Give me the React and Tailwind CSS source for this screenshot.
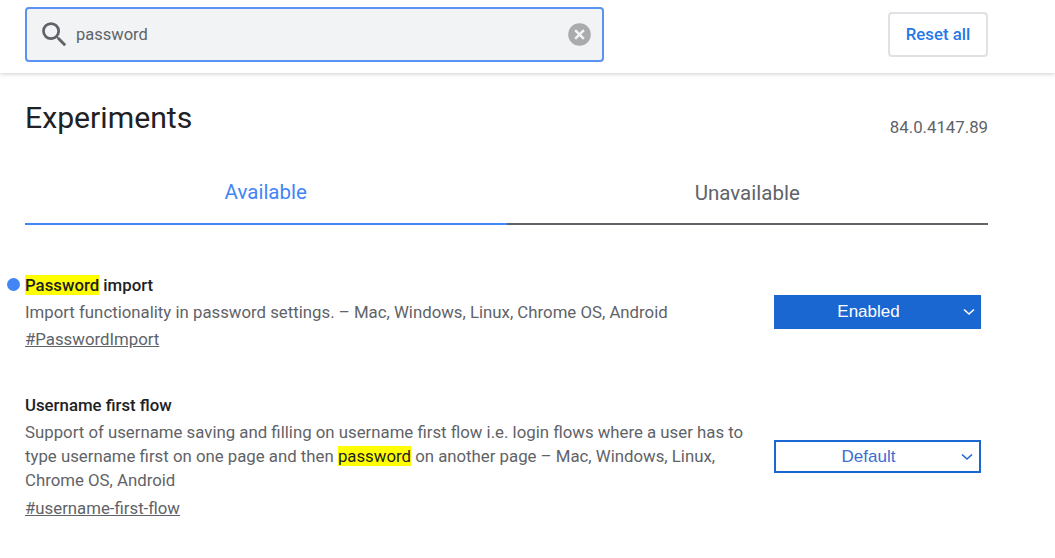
const Mark = ({ children }) => <span className="bg-[#ffff00] text-[#202124]">{children}</span>;

const Chevron = ({ color }) => (
  <svg width="12" height="8" viewBox="0 0 12 8" className="absolute right-[6px] top-1/2 -translate-y-1/2" fill="none">
    <path d="M1 1.5 L6 6 L11 1.5" stroke={color} strokeWidth="1.6" />
  </svg>
);

const Experiment = ({ title, dot, children, link, linkClass, select }) => (
  <div className="relative flex justify-between items-center">
    {dot && <span className="absolute left-[-18px] top-[5px] w-[13px] h-[13px] rounded-full bg-[#4285f4]" />}
    <div className="w-[730px]">
      <h3 className="text-[16.8px] leading-[24px] font-medium text-[#202124]">{title}</h3>
      <p className="text-[16.8px] leading-[24px] text-[#5f6368] mt-[3px]">{children}</p>
      <a className={`block text-[16.8px] leading-[24px] text-[#5f6368] underline ${linkClass}`}>{link}</a>
    </div>
    {select}
  </div>
);

export default function App() {
  return (
    <div className="w-[1055px] h-[558px] overflow-hidden bg-white font-['Roboto',sans-serif]">
      <header className="h-[73px] flex items-start justify-between pl-[25px] pr-[67px] pt-[7px] shadow-[0_1px_4px_rgba(60,64,67,0.25)]">
        <div className="w-[579px] h-[55px] flex items-center bg-[#f1f3f4] border-2 border-[#5b93f2] rounded-[4px] pl-[11px] pr-[11px]">
          <svg width="33" height="33" viewBox="0 0 24 24" fill="#5f6368">
            <path d="M15.5 14h-.79l-.28-.27A6.471 6.471 0 0 0 16 9.5 6.5 6.5 0 1 0 9.5 16c1.61 0 3.09-.59 4.23-1.57l.27.28v.79l5 4.99L20.49 19l-4.99-5zm-6 0C7.01 14 5 11.99 5 9.5S7.01 5 9.5 5 14 7.01 14 9.5 11.99 14 9.5 14z" />
          </svg>
          <span className="ml-[5px] mt-[2px] flex-1 text-[16.5px] text-[#5f6368]">password</span>
          <svg width="23" height="23" viewBox="0 0 22 22">
            <circle cx="11" cy="11" r="10.8" fill="#a9abad" />
            <path d="M6.8 6.8 L15.2 15.2 M15.2 6.8 L6.8 15.2" stroke="#f1f3f4" strokeWidth="2.4" />
          </svg>
        </div>
        <button className="mt-[5px] w-[100px] h-[45px] bg-white border-2 border-[#dfe1e5] rounded-[4px] text-[16.8px] font-medium text-[#2579e8]">
          Reset all
        </button>
      </header>

      <main className="pl-[25px] pr-[67px]">
        <div className="flex justify-between items-start h-[89px]">
          <h1 className="mt-[25px] text-[30.2px] leading-[40px] text-[#202124]">Experiments</h1>
          <span className="mt-[42px] text-[16.8px] leading-[24px] text-[#5f6368]">84.0.4147.89</span>
        </div>

        <div className="flex h-[63px]">
          <div className="w-1/2 border-b-2 border-[#4285f4] pt-[16px] text-center text-[20.5px] leading-[28px] text-[#4285f4]">Available</div>
          <div className="w-1/2 border-b-2 border-[#5f6368] pt-[17px] text-center text-[20.5px] leading-[28px] text-[#5f6368]">Unavailable</div>
        </div>

        <div className="mt-[48px] flex flex-col gap-[42px]">
          <Experiment
            dot
            title={<><Mark>Password</Mark> import</>}
            link="#PasswordImport"
            linkClass="mt-[3px]"
            select={
              <div className="relative mr-[7px] mb-[1px] w-[207px] h-[34px] flex items-center justify-center pr-[18px] bg-[#1a67d2] font-['Liberation_Sans',sans-serif] text-[17px] text-white">
                Enabled
                <Chevron color="#ffffff" />
              </div>
            }
          >
            Import functionality in password settings. – Mac, Windows, Linux, Chrome OS, Android
          </Experiment>
          <Experiment
            title="Username first flow"
            link="#username-first-flow"
            linkClass="mt-[4px]"
            select={
              <div className="relative mr-[7px] w-[207px] h-[33px] flex items-center justify-center pr-[18px] bg-white border-2 border-[#1a67d2] font-['Liberation_Sans',sans-serif] text-[17px] text-[#3b6ed0]">
                Default
                <Chevron color="#1a67d2" />
              </div>
            }
          >
            Support of username saving and filling on username first flow i.e. login flows where a user has to type username first on one page and then <Mark>password</Mark> on another page – Mac, Windows, Linux, Chrome OS, Android
          </Experiment>
        </div>
      </main>
    </div>
  );
}
